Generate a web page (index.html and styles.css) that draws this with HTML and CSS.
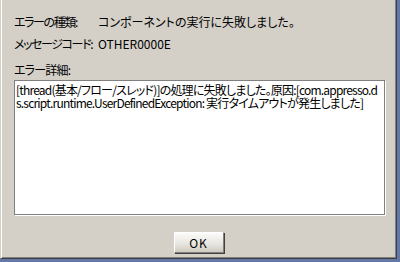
FILE: index.html
```html
<!DOCTYPE html>
<html lang="ja">
<head>
    <meta charset="UTF-8">
    <title>エラー</title>
    <link rel="stylesheet" href="styles.css">
</head>
<body>
    <div class="dialog">
        <div class="info">
            <span class="label">エラーの種類:</span>
            <span class="value">コンポーネントの実行に失敗しました。</span>
            <span class="label">メッセージコード:</span>
            <span class="value">OTHER0000E</span>
        </div>

        <div class="detail-label">エラー詳細:</div>
        <div class="detail">[thread(基本/フロー/スレッド)]の処理に失敗しました。原因:[com.appresso.ds.script.runtime.UserDefinedException: 実行タイムアウトが発生しました]</div>

        <div class="actions">
            <button class="ok">OK</button>
        </div>
    </div>
</body>
</html>
```

FILE: styles.css
```css
body {
    margin: 0;
    padding: 0;
    background: #6478a8;
    font-family: "Noto Sans CJK JP", "DejaVu Sans", sans-serif;
    font-size: 12px;
    font-feature-settings: "palt";
    letter-spacing: -0.8px;
    color: #000;
}

.dialog {
    box-sizing: border-box;
    width: 397px;
    height: 259px;
    padding-left: 13px;
    padding-top: 13px;
    background-color: #d4d0c8;
    border-left: 1px solid #d4d0c8;
    border-right: 1px solid #404040;
    border-bottom: 1px solid #404040;
    box-shadow: inset 1px 0 0 #fff, inset -1px -1px 0 #808080;
}

.info {
    display: grid;
    grid-template-columns: 84px auto;
    row-gap: 4px;
    line-height: 18px;
    white-space: nowrap;
}

.info .label {
    letter-spacing: -1.4px;
}

.info .value {
    letter-spacing: 0;
}

.detail-label {
    margin-top: 8px;
    line-height: 18px;
}

.detail {
    margin-top: 1px;
    width: 371px;
    height: 135px;
    box-sizing: border-box;
    background-color: #fff;
    border: 1px solid #808080;
    box-shadow: 1px 1px 0 #fff;
    padding: 2px 1px;
    line-height: 13px;
    word-break: break-all;
}

.actions {
    display: flex;
    justify-content: center;
    margin-top: 17px;
    padding-right: 13px;
}

.ok {
    width: 50px;
    height: 21px;
    padding: 0;
    font-family: inherit;
    font-size: 12px;
    letter-spacing: 1px;
    color: #000;
    background: linear-gradient(#fbfbf9, #e6e4de 60%, #cdc9c0);
    border: 1px solid;
    border-color: #fff #808080 #808080 #fff;
    box-shadow: 1px 1px 0 #404040;
    cursor: pointer;
}
```
